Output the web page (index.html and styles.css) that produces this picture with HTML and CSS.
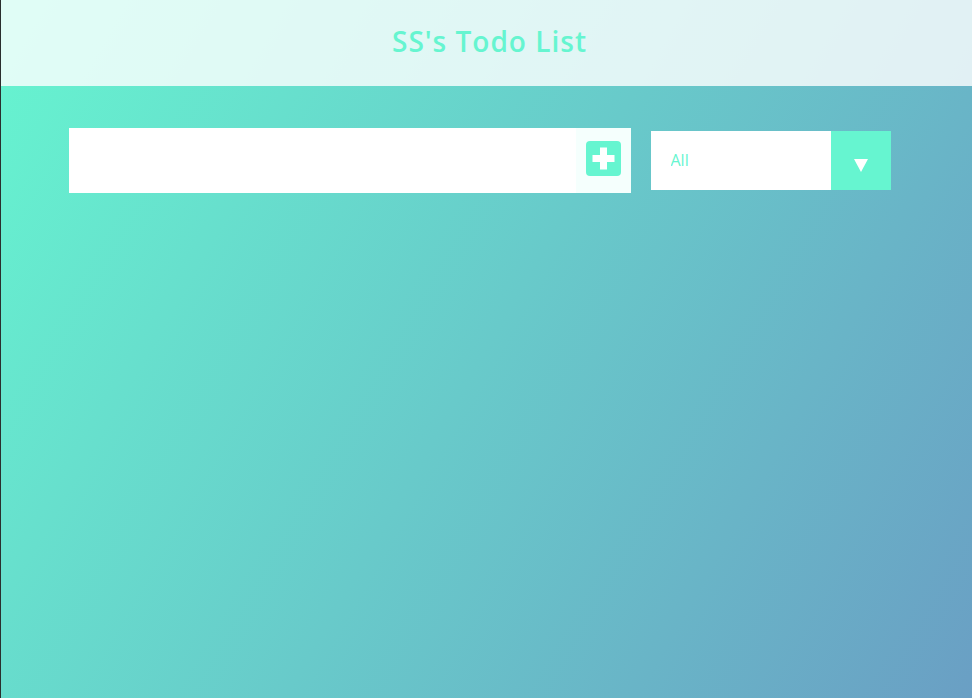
FILE: index.html
```html
<!DOCTYPE html>
<html lang="en">
<head>
<meta charset="utf-8">
<title>SS's Todo List</title>
<link rel="stylesheet" href="styles.css">
</head>
<body>
<header class="header">
  <h1 class="title">SS's Todo List</h1>
</header>
<form class="todo-form">
  <div class="input-group">
    <input class="todo-input" type="text" aria-label="New todo">
    <button class="add-btn" type="button" aria-label="Add">
      <svg width="35" height="35" viewBox="0 0 35 35">
        <rect x="0" y="0" width="35" height="35" rx="4" fill="#66f5d0"/>
        <rect x="14" y="6.5" width="7" height="22" fill="#fff"/>
        <rect x="6.5" y="14" width="22" height="7" fill="#fff"/>
      </svg>
    </button>
  </div>
  <div class="select-wrap">
    <select class="filter">
      <option>All</option>
      <option>Completed</option>
      <option>Uncompleted</option>
    </select>
    <span class="arrow">
      <svg width="14" height="13" viewBox="0 0 14 13"><polygon points="0,0 14,0 7,13" fill="#fff"/></svg>
    </span>
  </div>
</form>
<ul class="todo-list"></ul>
</body>
</html>
```
FILE: styles.css
```css
* { box-sizing: border-box; }
html, body { margin: 0; padding: 0; }
body {
  min-height: 100vh;
  background: linear-gradient(120deg, #66f5d0 0%, #6a9fc4 100%);
  font-family: "Open Sans", "Liberation Sans", sans-serif;
  border-left: 1px solid #2a2f2e;
}
.header {
  height: 86px;
  background: rgba(255, 255, 255, 0.8);
  display: flex;
  align-items: center;
  justify-content: center;
  padding-bottom: 4px;
}
.title {
  margin: 0;
  font-size: 28px;
  font-weight: 600;
  color: #66f5d0;
  letter-spacing: 1px;
  padding-left: 6px;
}
.todo-form {
  display: flex;
  align-items: center;
  justify-content: center;
  padding-top: 42px;
  gap: 20px;
  padding-right: 14px;
}
.input-group {
  display: flex;
  height: 65px;
  width: 562px;
  background: #fff;
}
.todo-input {
  flex: 1;
  border: none;
  outline: none;
  background: #fff;
  font-size: 20px;
  padding: 0 16px;
  font-family: inherit;
}
.add-btn {
  width: 55px;
  border: none;
  background: #f5fffd;
  padding: 13px 10px 17px;
  display: flex;
  align-items: flex-start;
  cursor: pointer;
}
.add-btn svg { display: block; }
.select-wrap {
  display: flex;
  width: 240px;
  height: 59px;
  background: #fff;
}
.filter {
  appearance: none;
  -webkit-appearance: none;
  flex: 1;
  border: none;
  outline: none;
  background: #fff;
  color: #66f5d0;
  font-family: inherit;
  font-size: 16px;
  padding: 0 20px 2px;
  cursor: pointer;
}
.arrow {
  width: 60px;
  background: #66f5d0;
  display: flex;
  justify-content: center;
  padding-top: 28px;
}
.arrow svg { display: block; }
.todo-list { list-style: none; margin: 0; padding: 0; }
```
